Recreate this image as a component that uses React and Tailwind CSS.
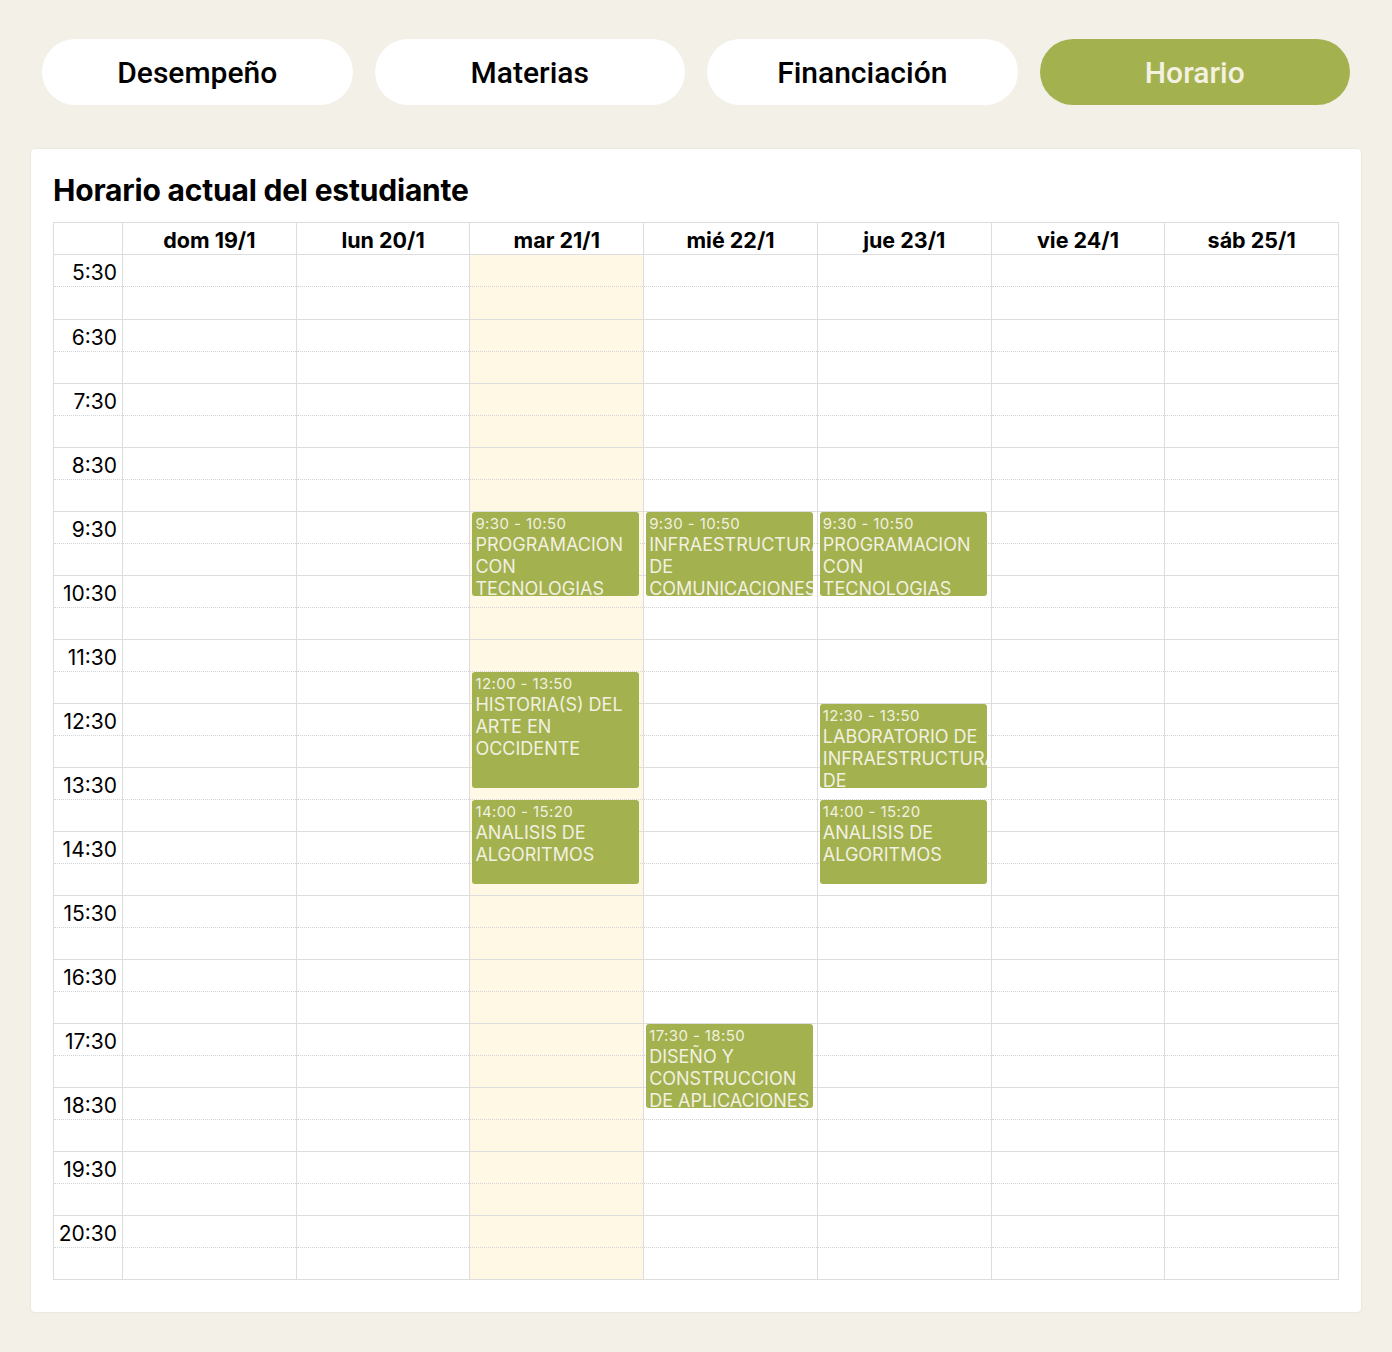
import React from 'react';

const tabs = ['Desempeño', 'Materias', 'Financiación', 'Horario'];
const days = ['dom 19/1', 'lun 20/1', 'mar 21/1', 'mié 22/1', 'jue 23/1', 'vie 24/1', 'sáb 25/1'];
const hours = ['5:30', '6:30', '7:30', '8:30', '9:30', '10:30', '11:30', '12:30', '13:30', '14:30', '15:30', '16:30', '17:30', '18:30', '19:30', '20:30'];

// minutes from 5:30 -> px (64px per hour)
const toY = (t) => {
  const [h, m] = t.split(':').map(Number);
  return ((h * 60 + m - 330) * 64) / 60;
};

const events = [
  { day: 2, start: '9:30', end: '10:50', title: 'PROGRAMACION CON TECNOLOGIAS WEB' },
  { day: 3, start: '9:30', end: '10:50', title: 'INFRAESTRUCTURA DE COMUNICACIONES' },
  { day: 4, start: '9:30', end: '10:50', title: 'PROGRAMACION CON TECNOLOGIAS WEB' },
  { day: 2, start: '12:00', end: '13:50', title: 'HISTORIA(S) DEL ARTE EN OCCIDENTE' },
  { day: 4, start: '12:30', end: '13:50', title: 'LABORATORIO DE INFRAESTRUCTURA DE COMUNICACIONES' },
  { day: 2, start: '14:00', end: '15:20', title: 'ANALISIS DE ALGORITMOS' },
  { day: 4, start: '14:00', end: '15:20', title: 'ANALISIS DE ALGORITMOS' },
  { day: 3, start: '17:30', end: '18:50', title: 'DISEÑO Y CONSTRUCCION DE APLICACIONES MOVILES' },
];

const Slots = () => (
  <>
    {hours.map((h, i) => (
      <div key={h} className={`h-[64px] ${i > 0 ? 'border-t border-[#dddddd]' : ''}`}>
        <div className="h-[32px] border-b border-dotted border-[#d4d4d4]" />
      </div>
    ))}
  </>
);

const App = () => {
  return (
    <div className="min-h-[1352px] bg-[#f3f0e8] px-[42px] pt-[39px] font-['Inter',sans-serif] text-black">
      <div className="flex gap-[22px]">
        {tabs.map((t) => (
          <div
            key={t}
            className={`flex h-[66px] flex-1 items-center justify-center rounded-full pt-[1px] font-['Roboto',sans-serif] text-[30px] font-medium ${
              t === 'Horario' ? 'bg-[#a3b14f] text-[#f4f1e2]' : 'bg-white text-black'
            }`}
          >
            {t}
          </div>
        ))}
      </div>

      <div className="-mx-[11px] mt-[44px] rounded bg-white px-[22px] pb-[32px] pt-[24px] shadow-[0_0_3px_rgba(0,0,0,0.08)]">
        <h2 className="mb-[15px] text-[30px] font-bold leading-[34px] tracking-[-0.2px]">Horario actual del estudiante</h2>

        <div className="border border-[#dddddd]">
          <div className="grid h-[32px] grid-cols-[68px_repeat(7,1fr)] border-b border-[#dddddd]">
            <div />
            {days.map((d) => (
              <div key={d} className="flex items-center justify-center border-l border-[#dddddd] pt-[1px] text-[21.5px] font-bold">
                {d}
              </div>
            ))}
          </div>

          <div className="grid grid-cols-[68px_repeat(7,1fr)]">
            <div>
              {hours.map((h, i) => (
                <div key={h} className={`h-[64px] ${i > 0 ? 'border-t border-[#dddddd]' : ''}`}>
                  <div className="flex h-[32px] items-center justify-end border-b border-dotted border-[#d4d4d4] pr-[5px] pt-[4px] text-[21px]">
                    {h}
                  </div>
                </div>
              ))}
            </div>
            {days.map((d, di) => (
              <div key={d} className={`relative border-l border-[#dddddd] ${di === 2 ? 'bg-[#fef8e4]' : ''}`}>
                <Slots />
                {events
                  .filter((e) => e.day === di)
                  .map((e, k) => {
                    const top = toY(e.start);
                    const height = toY(e.end) - top;
                    return (
                      <div
                        key={k}
                        className="absolute left-[2px] right-[4px] overflow-hidden rounded-[3px] bg-[#a3b14f] px-[3px] text-[#f2f0e0]"
                        style={{ top: top + 1, height: height - 1 }}
                      >
                        <div className="pt-[2px] text-[15px] leading-[20px] tracking-[0.4px]">
                          {e.start} - {e.end}
                        </div>
                        <div className="text-[18px] leading-[22px]">{e.title}</div>
                      </div>
                    );
                  })}
              </div>
            ))}
          </div>
        </div>
      </div>
    </div>
  );
};

export default App;
